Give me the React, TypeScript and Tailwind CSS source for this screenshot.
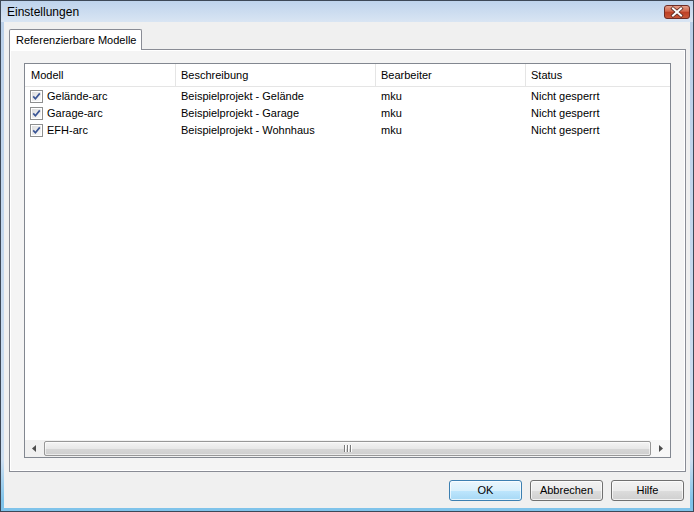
import React from 'react';

interface ModelRow {
  name: string;
  description: string;
  editor: string;
  status: string;
}

const rows: ModelRow[] = [
  { name: 'Gelände-arc', description: 'Beispielprojekt - Gelände', editor: 'mku', status: 'Nicht gesperrt' },
  { name: 'Garage-arc', description: 'Beispielprojekt - Garage', editor: 'mku', status: 'Nicht gesperrt' },
  { name: 'EFH-arc', description: 'Beispielprojekt - Wohnhaus', editor: 'mku', status: 'Nicht gesperrt' },
];

function CloseButton() {
  return (
    <svg width="26" height="14" viewBox="0 0 26 14">
      <defs>
        <linearGradient id="closeRed" x1="0" y1="0" x2="0" y2="1">
          <stop offset="0" stopColor="#e6a48f" />
          <stop offset="0.45" stopColor="#d0664c" />
          <stop offset="0.5" stopColor="#bd3f24" />
          <stop offset="1" stopColor="#c9593a" />
        </linearGradient>
      </defs>
      <rect x="0.5" y="0.5" width="25" height="13" rx="2.5" fill="url(#closeRed)" stroke="#6e2d26" />
      <path d="M9 3.5 L17 10.5 M17 3.5 L9 10.5" stroke="#5b2a22" strokeWidth="3.6" strokeLinecap="square" />
      <path d="M9 3.5 L17 10.5 M17 3.5 L9 10.5" stroke="#ffffff" strokeWidth="2" strokeLinecap="square" />
    </svg>
  );
}

function Checkbox() {
  return (
    <div className="w-[13px] h-[13px] border border-[#8e8f8f] bg-white p-px shrink-0">
      <div className="w-full h-full bg-[linear-gradient(135deg,#dcdcdc,#fbfbfb)] flex items-center justify-center">
        <svg width="9" height="9" viewBox="0 0 9 9">
          <path d="M1.2 4.4 L3.4 6.8 L7.8 1.4" fill="none" stroke="#3a5595" strokeWidth="1.7" />
        </svg>
      </div>
    </div>
  );
}

function ArrowLeft() {
  return (
    <svg width="4" height="7" viewBox="0 0 4 7">
      <path d="M4 0 L0 3.5 L4 7 Z" fill="#4d4d4d" />
    </svg>
  );
}

function ArrowRight() {
  return (
    <svg width="4" height="7" viewBox="0 0 4 7">
      <path d="M0 0 L4 3.5 L0 7 Z" fill="#4d4d4d" />
    </svg>
  );
}

function Button({ label, primary }: { label: string; primary?: boolean }) {
  return (
    <div
      className={
        primary
          ? 'w-[73px] h-[21px] rounded-[3px] border border-[#3c7fb1] bg-[linear-gradient(#eaf6fd,#d9f0fc_50%,#bee6fd_50%,#a7d9f5)] shadow-[inset_0_0_0_1px_#ffffffb0] flex items-center justify-center'
          : 'w-[73px] h-[21px] rounded-[3px] border border-[#707070] bg-[linear-gradient(#f2f2f2,#ebebeb_50%,#dddddd_50%,#cfcfcf)] shadow-[inset_0_0_0_1px_#ffffffb0] flex items-center justify-center'
      }
    >
      <span className="text-[11px] text-black">{label}</span>
    </div>
  );
}

export default function App() {
  return (
    <div className="w-[694px] h-[512px] border border-[#3d4857] bg-[linear-gradient(#b9cfe9,#cddff2_90%,#7fc3ea_98%)] flex flex-col font-['Liberation_Sans',Arial,sans-serif] text-black overflow-hidden">
      {/* Title bar */}
      <div className="h-[21px] flex items-center justify-between pl-[6px] pr-[3px] bg-[linear-gradient(#bed3ec,#d9e5f3)]">
        <span className="text-[12px]">Einstellungen</span>
        <CloseButton />
      </div>

      {/* Client area */}
      <div className="flex-1 mx-[3px] mb-[3px] bg-[#f0f0f0] flex flex-col pt-[7px]">
        {/* Tab */}
        <div className="ml-[5px] relative z-10 -mb-px w-[133px] h-[21px] border border-b-0 border-[#898c95] rounded-t-[2px] bg-white flex items-center pl-[6px]">
          <span className="text-[11px]">Referenzierbare Modelle</span>
        </div>

        {/* Tab panel */}
        <div className="ml-[5px] w-[677px] h-[423px] border border-[#898c95] bg-[#f4f4f4] shadow-[inset_0_0_0_1px_#ffffff] pt-[13px] pl-[14px]">
          {/* List view */}
          <div className="w-[647px] h-[395px] border border-[#828790] bg-white flex flex-col text-[11px]">
            <div className="h-[23px] flex border-b border-[#e5e5e5] shrink-0">
              <div className="w-[151px] border-r border-[#e5e5e5] pl-[6px] flex items-center">Modell</div>
              <div className="w-[200px] border-r border-[#e5e5e5] pl-[5px] flex items-center">Beschreibung</div>
              <div className="w-[150px] border-r border-[#e5e5e5] pl-[5px] flex items-center">Bearbeiter</div>
              <div className="flex-1 pl-[5px] flex items-center">Status</div>
            </div>
            <div className="flex-1 pt-px">
              {rows.map((row) => (
                <div key={row.name} className="h-[17px] flex items-center">
                  <div className="w-[151px] pl-[5px] flex items-center gap-[4px]">
                    <Checkbox />
                    <span>{row.name}</span>
                  </div>
                  <div className="w-[200px] pl-[5px]">{row.description}</div>
                  <div className="w-[150px] pl-[5px]">{row.editor}</div>
                  <div className="flex-1 pl-[5px]">{row.status}</div>
                </div>
              ))}
            </div>
            {/* Horizontal scrollbar */}
            <div className="h-[17px] flex bg-[linear-gradient(90deg,#f0f0f0,#f7f7f7)] shrink-0">
              <div className="w-[18px] flex items-center justify-center">
                <ArrowLeft />
              </div>
              <div className="flex-1 mx-px my-px rounded-[2px] border border-[#979797] bg-[linear-gradient(#f4f4f4,#e8e8e8_50%,#d6d6d6_50%,#cfcfcf)] shadow-[inset_0_0_0_1px_#ffffff90] flex items-center justify-center">
                <div className="flex gap-[1px]">
                  <div className="w-[2px] h-[7px] bg-[linear-gradient(90deg,#7a7a7a_50%,#ffffff_50%)]" />
                  <div className="w-[2px] h-[7px] bg-[linear-gradient(90deg,#7a7a7a_50%,#ffffff_50%)]" />
                  <div className="w-[2px] h-[7px] bg-[linear-gradient(90deg,#7a7a7a_50%,#ffffff_50%)]" />
                </div>
              </div>
              <div className="w-[18px] flex items-center justify-center">
                <ArrowRight />
              </div>
            </div>
          </div>
        </div>

        {/* Buttons */}
        <div className="mt-[8px] flex justify-end gap-[8px] pr-[6px]">
          <Button label="OK" primary />
          <Button label="Abbrechen" />
          <Button label="Hilfe" />
        </div>
      </div>
    </div>
  );
}
